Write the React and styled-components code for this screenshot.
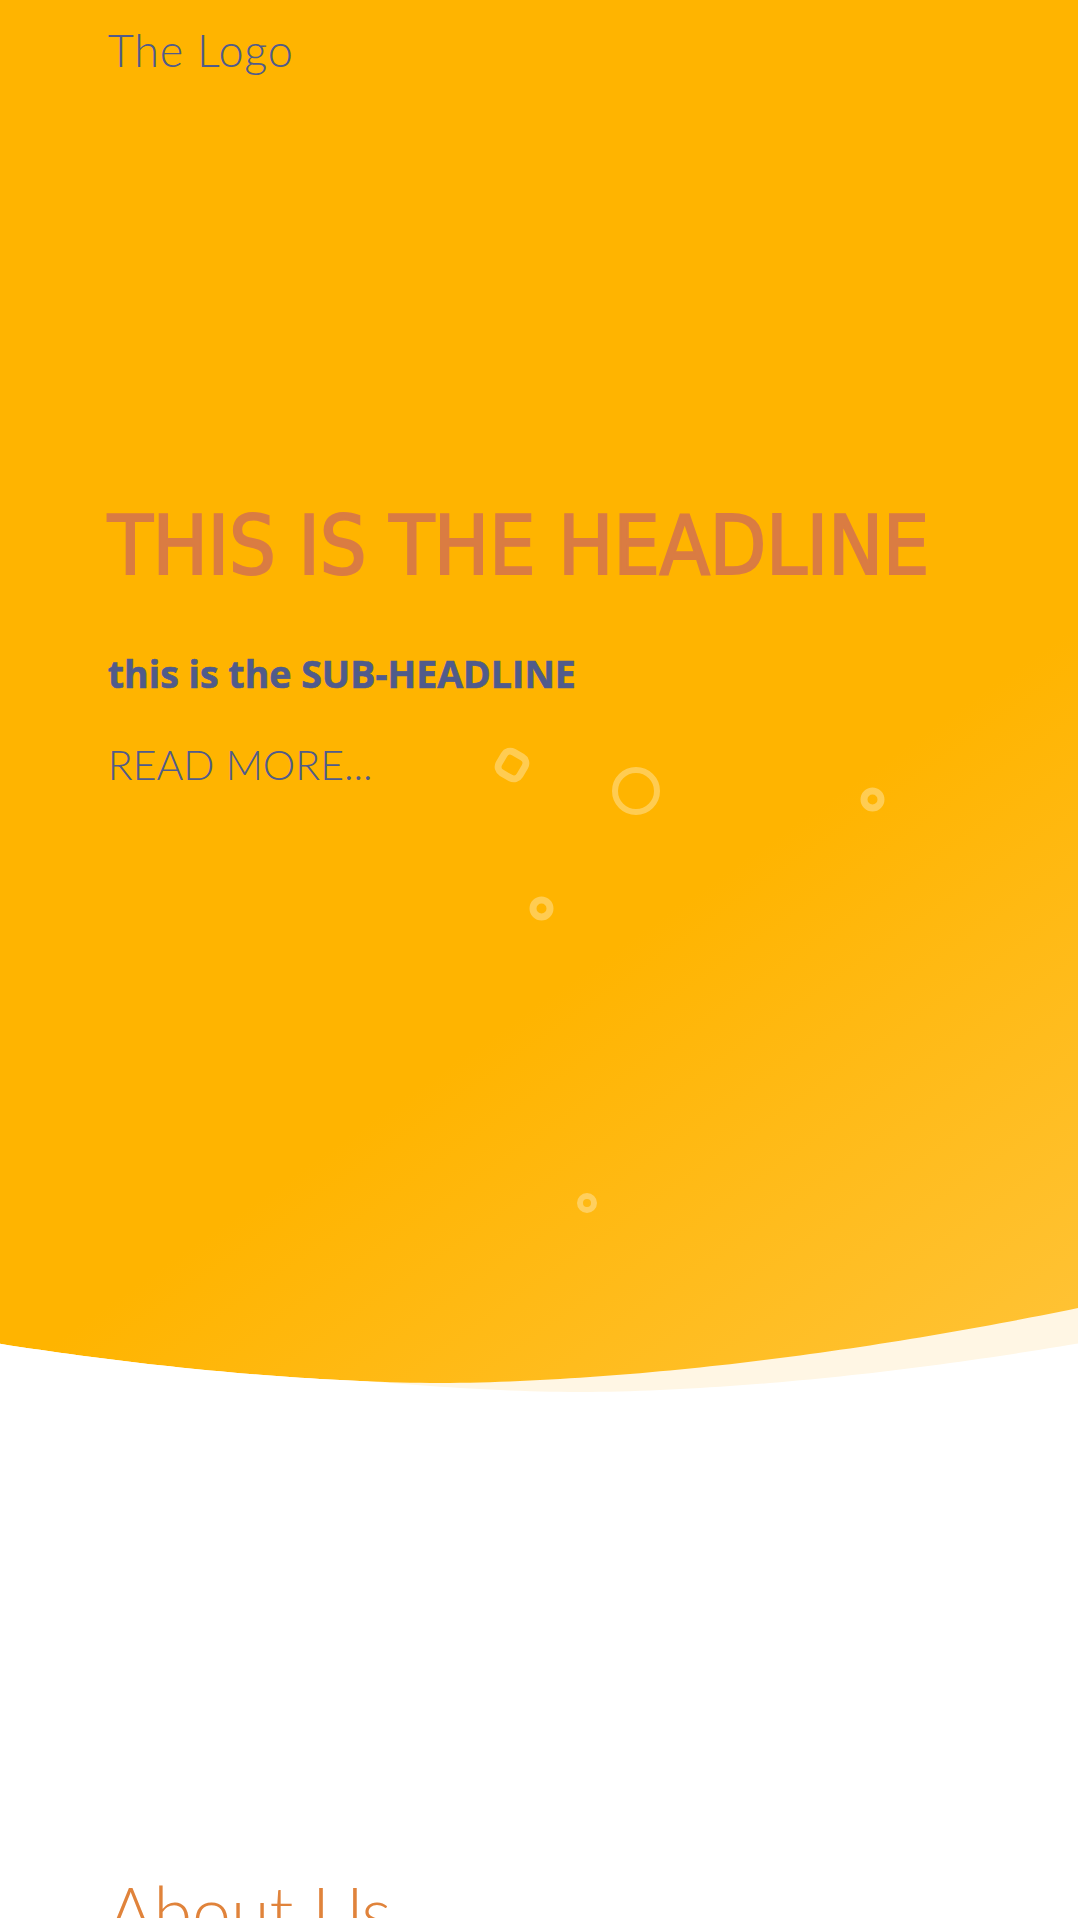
import React from "react";
import styled, { createGlobalStyle } from "styled-components";

const GlobalStyle = createGlobalStyle`
  html, body {
    margin: 0;
    padding: 0;
    background: #fff;
  }
  body {
    font-family: "Lato", "Liberation Sans", sans-serif;
  }
`;

const navy = "#505b8b";
const rust = "#da7c42";

const Hero = styled.section`
  position: relative;
  height: 1400px;
  background: linear-gradient(145deg, #ffb400 64%, #ffc43a 100%);
  overflow: hidden;
`;

const Row = styled.div`
  width: 80%;
  margin: 0 auto;
`;

const Header = styled(Row)`
  padding-top: 28px;
`;

const Logo = styled.a`
  font-family: "Lato", sans-serif;
  font-weight: 300;
  font-size: 45px;
  letter-spacing: 0.8px;
  line-height: 1;
  color: ${navy};
  text-decoration: none;
`;

const Content = styled(Row)`
  margin-top: 432px;
  position: relative;
  z-index: 2;
`;

const Headline = styled.h1`
  margin: 0;
  font-family: "DejaVu Sans Condensed", "DejaVu Sans", sans-serif;
  font-stretch: condensed;
  font-weight: 400;
  font-size: 82px;
  letter-spacing: -0.4px;
  line-height: 1;
  color: ${rust};
  -webkit-text-stroke: 2px ${rust};
`;

const SubHeadline = styled.h2`
  margin: 68px 0 0;
  font-family: "Open Sans", sans-serif;
  font-weight: 700;
  font-size: 37.5px;
  line-height: 1;
  color: ${navy};
  -webkit-text-stroke: 0.6px ${navy};
`;

const ReadMore = styled.a`
  display: inline-block;
  margin-top: 51px;
  font-family: "Lato", sans-serif;
  font-weight: 300;
  font-size: 41px;
  line-height: 1;
  color: ${navy};
  text-decoration: none;
`;

const Bubble = styled.svg`
  position: absolute;
  left: ${(p) => p.$x}px;
  top: ${(p) => p.$y}px;
  overflow: visible;
`;

const Divider = styled.svg`
  position: absolute;
  left: 0;
  bottom: 0;
  width: 100%;
  height: 140px;
  z-index: 1;
`;

const About = styled.section`
  padding-top: 476px;
  padding-bottom: 80px;
`;

const AboutTitle = styled.h2`
  margin: 0;
  font-family: "Lato", sans-serif;
  font-weight: 300;
  font-size: 70px;
  line-height: 1;
  color: #e0833b;
`;

const ringColor = "rgba(255,255,255,0.32)";

const Ring = ({ x, y, r, w }) => (
  <Bubble $x={x - r - w} $y={y - r - w} width={(r + w) * 2} height={(r + w) * 2}>
    <circle cx={r + w} cy={r + w} r={r} fill="none" stroke={ringColor} strokeWidth={w} />
  </Bubble>
);

const Diamond = ({ x, y }) => (
  <Bubble $x={x - 20} $y={y - 20} width="40" height="40">
    <rect
      x="8"
      y="8"
      width="24"
      height="24"
      rx="7"
      fill="none"
      stroke={ringColor}
      strokeWidth="7"
      transform="rotate(30 20 20)"
    />
  </Bubble>
);

// bottom edge of the yellow block, measured off the design
const curveY = (x, cx, cy) => cy - 75 * Math.pow(Math.abs(x - cx) / 638, 1.75);

const curvePath = (cx, cy, top) => {
  let d = `M0 ${curveY(0, cx, cy) - top}`;
  for (let x = 10; x <= 1080; x += 10) {
    d += ` L${x} ${(curveY(x, cx, cy) - top).toFixed(2)}`;
  }
  return d;
};

const WaveDivider = () => {
  const top = 1260;
  const yellow = curvePath(440, 1383, top);
  const cream = curvePath(580, 1392, top);
  return (
    <Divider viewBox="0 0 1078 140" preserveAspectRatio="none">
      <defs>
        <clipPath id="below-yellow">
          <path d={`${yellow} L1080 140 L0 140 Z`} />
        </clipPath>
      </defs>
      <g clipPath="url(#below-yellow)">
        <rect x="0" y="0" width="1080" height="140" fill="#fff6e4" />
        <path d={`${cream} L1080 140 L0 140 Z`} fill="#fff" />
      </g>
    </Divider>
  );
};

export default function App() {
  return (
    <>
      <GlobalStyle />
      <Hero>
        <Header>
          <Logo href="#">The Logo</Logo>
        </Header>
        <Content>
          <Headline>THIS IS THE HEADLINE</Headline>
          <SubHeadline>this is the SUB-HEADLINE</SubHeadline>
          <ReadMore href="#">READ MORE...</ReadMore>
        </Content>
        <Diamond x={512} y={765} />
        <Ring x={636} y={791} r={21} w={6} />
        <Ring x={872} y={799} r={8.5} w={7} />
        <Ring x={541} y={908} r={8.5} w={7} />
        <Ring x={587} y={1203} r={7} w={6} />
        <WaveDivider />
      </Hero>
      <About>
        <Row>
          <AboutTitle>About Us</AboutTitle>
        </Row>
      </About>
    </>
  );
}
